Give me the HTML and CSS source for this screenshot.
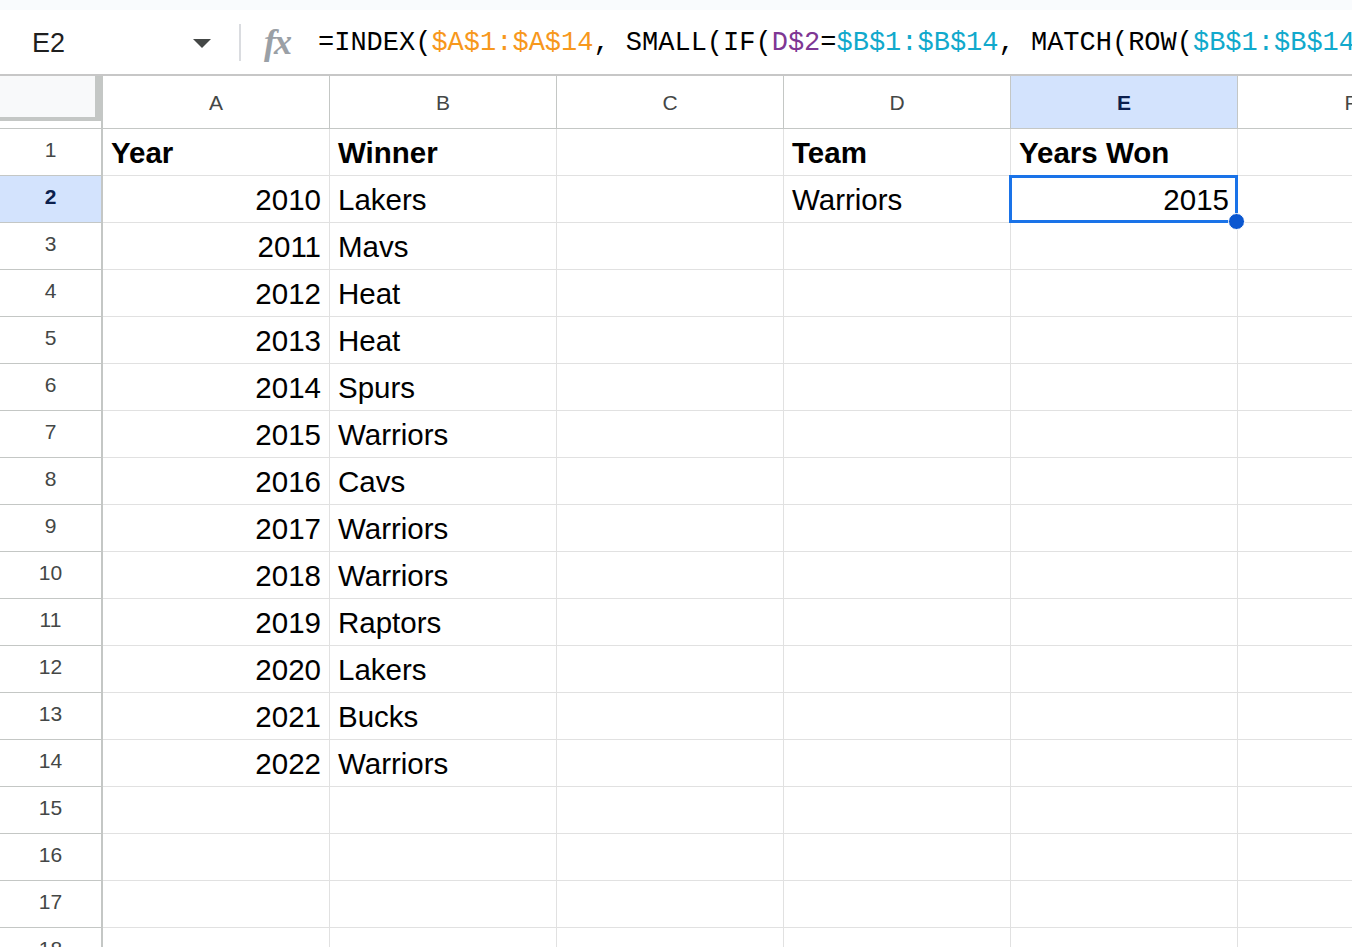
FILE: index.html
```html
<!DOCTYPE html>
<html>
	<head>
		<meta charset="utf-8" />
		<title>Sheet</title>
		<link rel="stylesheet" href="styles.css">
	</head>
	<body>
		<div class="top-strip"></div>
		<!--formula bar-->
		<div class="formula-bar">
			<div class="name-box">
				<span class="cell-ref">E2</span>
				<span class="caret"></span>
			</div>
			<div class="divider"></div>
			<span class="fx">fx</span>
			<div class="formula">=INDEX(<span class="ref-a">$A$1:$A$14</span>, SMALL(IF(<span class="ref-d">D$2</span>=<span class="ref-b">$B$1:$B$14</span>, MATCH(ROW(<span class="ref-b">$B$1:$B$14</span></div>
		</div>

		<!--grid-->
		<div class="sheet">
			<div class="corner"><div class="corner-box"></div></div>
			<div class="col-head">A</div>
			<div class="col-head">B</div>
			<div class="col-head">C</div>
			<div class="col-head">D</div>
			<div class="col-head active">E</div>
			<div class="col-head">F</div>

			<div class="row-head">1</div>
			<div class="cell bold">Year</div>
			<div class="cell bold">Winner</div>
			<div class="cell"></div>
			<div class="cell bold">Team</div>
			<div class="cell bold">Years Won</div>
			<div class="cell"></div>

			<div class="row-head active">2</div>
			<div class="cell num">2010</div>
			<div class="cell">Lakers</div>
			<div class="cell"></div>
			<div class="cell">Warriors</div>
			<div class="cell num">2015</div>
			<div class="cell"></div>

			<div class="row-head">3</div>
			<div class="cell num">2011</div>
			<div class="cell">Mavs</div>
			<div class="cell"></div><div class="cell"></div><div class="cell"></div><div class="cell"></div>

			<div class="row-head">4</div>
			<div class="cell num">2012</div>
			<div class="cell">Heat</div>
			<div class="cell"></div><div class="cell"></div><div class="cell"></div><div class="cell"></div>

			<div class="row-head">5</div>
			<div class="cell num">2013</div>
			<div class="cell">Heat</div>
			<div class="cell"></div><div class="cell"></div><div class="cell"></div><div class="cell"></div>

			<div class="row-head">6</div>
			<div class="cell num">2014</div>
			<div class="cell">Spurs</div>
			<div class="cell"></div><div class="cell"></div><div class="cell"></div><div class="cell"></div>

			<div class="row-head">7</div>
			<div class="cell num">2015</div>
			<div class="cell">Warriors</div>
			<div class="cell"></div><div class="cell"></div><div class="cell"></div><div class="cell"></div>

			<div class="row-head">8</div>
			<div class="cell num">2016</div>
			<div class="cell">Cavs</div>
			<div class="cell"></div><div class="cell"></div><div class="cell"></div><div class="cell"></div>

			<div class="row-head">9</div>
			<div class="cell num">2017</div>
			<div class="cell">Warriors</div>
			<div class="cell"></div><div class="cell"></div><div class="cell"></div><div class="cell"></div>

			<div class="row-head">10</div>
			<div class="cell num">2018</div>
			<div class="cell">Warriors</div>
			<div class="cell"></div><div class="cell"></div><div class="cell"></div><div class="cell"></div>

			<div class="row-head">11</div>
			<div class="cell num">2019</div>
			<div class="cell">Raptors</div>
			<div class="cell"></div><div class="cell"></div><div class="cell"></div><div class="cell"></div>

			<div class="row-head">12</div>
			<div class="cell num">2020</div>
			<div class="cell">Lakers</div>
			<div class="cell"></div><div class="cell"></div><div class="cell"></div><div class="cell"></div>

			<div class="row-head">13</div>
			<div class="cell num">2021</div>
			<div class="cell">Bucks</div>
			<div class="cell"></div><div class="cell"></div><div class="cell"></div><div class="cell"></div>

			<div class="row-head">14</div>
			<div class="cell num">2022</div>
			<div class="cell">Warriors</div>
			<div class="cell"></div><div class="cell"></div><div class="cell"></div><div class="cell"></div>

			<div class="row-head">15</div>
			<div class="cell"></div><div class="cell"></div><div class="cell"></div><div class="cell"></div><div class="cell"></div><div class="cell"></div>

			<div class="row-head">16</div>
			<div class="cell"></div><div class="cell"></div><div class="cell"></div><div class="cell"></div><div class="cell"></div><div class="cell"></div>

			<div class="row-head">17</div>
			<div class="cell"></div><div class="cell"></div><div class="cell"></div><div class="cell"></div><div class="cell"></div><div class="cell"></div>

			<div class="row-head">18</div>
			<div class="cell"></div><div class="cell"></div><div class="cell"></div><div class="cell"></div><div class="cell"></div><div class="cell"></div>

			<!--selected cell E2-->
			<div class="selection"><span class="handle"></span></div>
		</div>
	</body>
</html>
```

FILE: styles.css
```css
*{
	margin: 0;
	padding: 0;
	box-sizing: border-box;
}
body{
	width: 1352px;
	height: 947px;
	overflow: hidden;
	background: #fff;
	font-family: "Liberation Sans", Arial, sans-serif;
	color: #000;
}
.top-strip{
	height: 10px;
	background-color: #f9fbfd;
}
/*formula bar*/
.formula-bar{
	height: 66px;
	display: flex;
	align-items: center;
	border-bottom: 2px solid #c7c7c7;
	white-space: nowrap;
	overflow: hidden;
}
.name-box{
	flex-shrink: 0;
	width: 239px;
	display: flex;
	align-items: center;
	padding-left: 32px;
	padding-top: 2px;
}
.cell-ref{
	font-size: 27px;
	color: #1f1f1f;
	width: 161px;
}
.caret{
	width: 0;
	height: 0;
	border-left: 9px solid transparent;
	border-right: 9px solid transparent;
	border-top: 9px solid #444746;
}
.divider{
	flex-shrink: 0;
	width: 2px;
	height: 37px;
	background-color: #dadce0;
}
.fx{
	flex-shrink: 0;
	margin-left: 23px;
	width: 54px;
	font-family: "Liberation Serif", "Times New Roman", serif;
	font-style: italic;
	font-weight: bold;
	font-size: 36px;
	color: #9aa0a6;
	letter-spacing: -2px;
}
.formula{
	flex-shrink: 0;
	font-family: "Liberation Mono", "DejaVu Sans Mono", monospace;
	font-size: 27px;
	color: #000;
	padding-top: 2px;
}
.ref-a{ color: #f7981d; }
.ref-d{ color: #7e3794; }
.ref-b{ color: #11a9cc; }

/*grid*/
.sheet{
	position: relative;
	display: grid;
	grid-template-columns: 103px repeat(6, 227px);
	grid-template-rows: 53px;
	grid-auto-rows: 47px;
	width: 1465px;
}
.corner{
	border-bottom: 1px solid #c4c7c5;
	border-right: 2px solid #c4c7c5;
}
.corner-box{
	width: 101px;
	height: 45px;
	background-color: #f8f9fa;
	border-right: 6px solid #c4c7c5;
	border-bottom: 4px solid #c4c7c5;
}
.col-head{
	display: flex;
	align-items: center;
	justify-content: center;
	font-size: 21px;
	color: #444746;
	border-right: 1px solid #c4c7c5;
	border-bottom: 1px solid #c4c7c5;
	padding-top: 1px;
}
.row-head{
	display: flex;
	align-items: center;
	justify-content: center;
	font-size: 21px;
	color: #444746;
	border-right: 2px solid #c4c7c5;
	border-bottom: 1px solid #c4c7c5;
	padding-bottom: 4px;
}
.col-head.active,
.row-head.active{
	background-color: #d3e3fd;
	color: #0b1f4d;
	font-weight: bold;
}
.cell{
	display: flex;
	align-items: center;
	font-size: 29.5px;
	padding: 2px 8px 0 8px;
	border-right: 1px solid #e1e1e1;
	border-bottom: 1px solid #e1e1e1;
	white-space: nowrap;
	overflow: hidden;
}
.cell.num{
	justify-content: flex-end;
}
.cell.bold{
	font-weight: bold;
}
/*selected cell*/
.selection{
	position: absolute;
	left: 1009px;
	top: 99px;
	width: 229px;
	height: 48px;
	border: 3px solid #1a73e8;
}
.handle{
	position: absolute;
	right: -10px;
	bottom: -10px;
	width: 17px;
	height: 17px;
	border-radius: 50%;
	background-color: #0b57d0;
	border: 1px solid #fff;
}
```
